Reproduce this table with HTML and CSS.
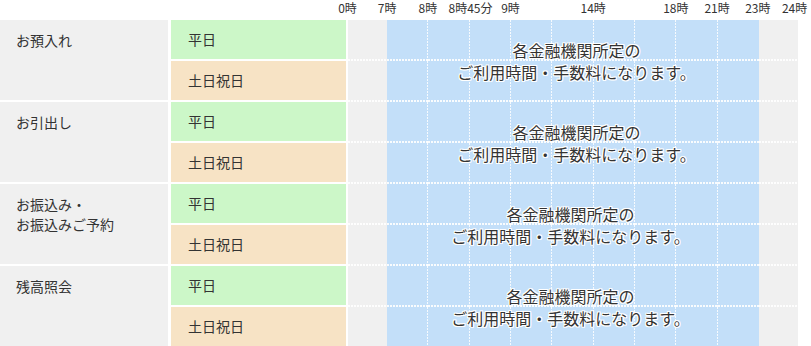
FILE: index.html
```html
<!DOCTYPE html>
<html lang="ja">
<head>
<meta charset="utf-8">
<title>ご利用時間</title>
<link rel="stylesheet" href="styles.css">
</head>
<body>
<div class="schedule">
  <div class="head">
    <div class="head-spacer"></div>
    <div class="ticks">
      <span class="tick">0時</span>
      <span class="tick">7時</span>
      <span class="tick">8時</span>
      <span class="tick">8時45分</span>
      <span class="tick">9時</span>
      <span class="tick"></span>
      <span class="tick">14時</span>
      <span class="tick"></span>
      <span class="tick">18時</span>
      <span class="tick">21時</span>
      <span class="tick">23時</span>
      <span class="tick">24時</span>
    </div>
  </div>

  <div class="group">
    <div class="service">お預入れ</div>
    <div class="days">
      <div class="day weekday">平日</div>
      <div class="day holiday">土日祝日</div>
    </div>
    <div class="timeline">
      <div class="cells">
        <div class="cell off"></div><div class="cell on"></div><div class="cell on"></div><div class="cell on"></div><div class="cell on"></div><div class="cell on"></div><div class="cell on"></div><div class="cell on"></div><div class="cell on"></div><div class="cell on end"></div><div class="cell off"></div>
        <div class="cell off"></div><div class="cell on"></div><div class="cell on"></div><div class="cell on"></div><div class="cell on"></div><div class="cell on"></div><div class="cell on"></div><div class="cell on"></div><div class="cell on"></div><div class="cell on end"></div><div class="cell off"></div>
      </div>
      <div class="overlay">
        <div class="note">各金融機関所定の<br>ご利用時間・手数料になります。</div>
      </div>
    </div>
  </div>

  <div class="group">
    <div class="service">お引出し</div>
    <div class="days">
      <div class="day weekday">平日</div>
      <div class="day holiday">土日祝日</div>
    </div>
    <div class="timeline">
      <div class="cells">
        <div class="cell off"></div><div class="cell on"></div><div class="cell on"></div><div class="cell on"></div><div class="cell on"></div><div class="cell on"></div><div class="cell on"></div><div class="cell on"></div><div class="cell on"></div><div class="cell on end"></div><div class="cell off"></div>
        <div class="cell off"></div><div class="cell on"></div><div class="cell on"></div><div class="cell on"></div><div class="cell on"></div><div class="cell on"></div><div class="cell on"></div><div class="cell on"></div><div class="cell on"></div><div class="cell on end"></div><div class="cell off"></div>
      </div>
      <div class="overlay">
        <div class="note">各金融機関所定の<br>ご利用時間・手数料になります。</div>
      </div>
    </div>
  </div>

  <div class="group">
    <div class="service">お振込み・<br>お振込みご予約</div>
    <div class="days">
      <div class="day weekday">平日</div>
      <div class="day holiday">土日祝日</div>
    </div>
    <div class="timeline">
      <div class="cells">
        <div class="cell off"></div><div class="cell on"></div><div class="cell on"></div><div class="cell on"></div><div class="cell on"></div><div class="cell on"></div><div class="cell on"></div><div class="cell on"></div><div class="cell on"></div><div class="cell on end"></div><div class="cell off"></div>
        <div class="cell off"></div><div class="cell on"></div><div class="cell on"></div><div class="cell on"></div><div class="cell on"></div><div class="cell on"></div><div class="cell on"></div><div class="cell on"></div><div class="cell on"></div><div class="cell on end"></div><div class="cell off"></div>
      </div>
      <div class="overlay">
        <div class="note note-left">各金融機関所定の<br>ご利用時間・手数料になります。</div>
      </div>
    </div>
  </div>

  <div class="group">
    <div class="service">残高照会</div>
    <div class="days">
      <div class="day weekday">平日</div>
      <div class="day holiday">土日祝日</div>
    </div>
    <div class="timeline">
      <div class="cells">
        <div class="cell off"></div><div class="cell on"></div><div class="cell on"></div><div class="cell on"></div><div class="cell on"></div><div class="cell on"></div><div class="cell on"></div><div class="cell on"></div><div class="cell on"></div><div class="cell on end"></div><div class="cell off"></div>
        <div class="cell off"></div><div class="cell on"></div><div class="cell on"></div><div class="cell on"></div><div class="cell on"></div><div class="cell on"></div><div class="cell on"></div><div class="cell on"></div><div class="cell on"></div><div class="cell on end"></div><div class="cell off"></div>
      </div>
      <div class="overlay">
        <div class="note note-left">各金融機関所定の<br>ご利用時間・手数料になります。</div>
      </div>
    </div>
  </div>
</div>
</body>
</html>
```

FILE: styles.css
```css
html, body {
  margin: 0;
  padding: 0;
  overflow: hidden;
  background: #fff;
}

body {
  font-family: "Noto Sans CJK JP", "Noto Sans", sans-serif;
  color: #333;
}

.schedule {
  width: 811px;
}

/* header with hour ticks: one cell centred on every hour boundary */
.head {
  display: flex;
  height: 20px;
}

.head-spacer {
  width: 328px;
  flex: none;
}

.ticks {
  width: 483px;
  display: grid;
  grid-template-columns: 39px 40.17px repeat(8, 41.33px) 40.17px 33px;
}

.tick {
  text-align: center;
  white-space: nowrap;
  font-size: 12px;
  line-height: 16px;
  color: #333;
}

.tick:last-child {
  text-align: left;
  padding-left: 4px;
}

/* one service group: two rows */
.group {
  display: flex;
  height: 82px;
}

.service {
  width: 168px;
  flex: none;
  box-sizing: border-box;
  padding: 10px 0 0 16px;
  background: #f0f0f0;
  border-bottom: 2px solid #fff;
  font-size: 14px;
  line-height: 20px;
}

.days {
  width: 175px;
  flex: none;
  margin-left: 3px;
  display: flex;
  flex-direction: column;
}

.day {
  height: 39px;
  border-bottom: 2px solid #fff;
  padding-left: 17px;
  font-size: 14px;
  line-height: 39px;
}

.weekday {
  background: #ccf7c8;
}

.holiday {
  background: #f7e3c5;
}

/* time grid */
.timeline {
  width: 450px;
  flex: none;
  margin-left: 2px;
  display: grid;
}

.cells,
.overlay {
  grid-area: 1 / 1;
  display: grid;
  grid-template-columns: 39px repeat(9, 1fr) 39px;
}

.cells {
  grid-template-rows: 41px 41px;
}

.cell {
  background-repeat: no-repeat;
  background-image:
    repeating-linear-gradient(90deg, rgba(255, 255, 255, 0.9) 0 2px, transparent 2px 3px);
  background-size: 100% 2px;
  background-position: left bottom;
}

.cell.off {
  background-color: #f0f0f0;
}

.cell.on {
  background-color: #c3dff9;
  background-image:
    repeating-linear-gradient(90deg, rgba(255, 255, 255, 0.9) 0 2px, transparent 2px 3px),
    repeating-linear-gradient(180deg, rgba(255, 255, 255, 0.85) 0 2px, transparent 2px 3px);
  background-size: 100% 2px, 1px 100%;
  background-position: left bottom, right top;
}

.cell.on.end {
  background-image:
    repeating-linear-gradient(90deg, rgba(255, 255, 255, 0.9) 0 2px, transparent 2px 3px);
  background-size: 100% 2px;
  background-position: left bottom;
}

.note {
  grid-column: 2 / 11;
  align-self: center;
  justify-self: center;
  padding-left: 7px;
  margin-top: -1px;
  text-align: center;
  font-size: 16px;
  line-height: 22px;
  color: #333;
  text-shadow:
    1px 0 0 #fff, -1px 0 0 #fff, 0 1px 0 #fff, 0 -1px 0 #fff,
    1px 1px 0 #fff, -1px -1px 0 #fff, 1px -1px 0 #fff, -1px 1px 0 #fff;
}

.note-left {
  padding-left: 0;
  margin-left: -5px;
}
```
